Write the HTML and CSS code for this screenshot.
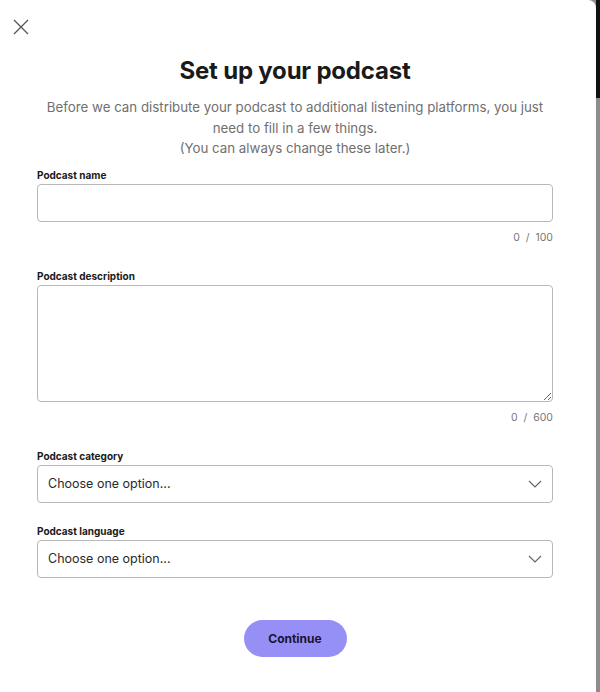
FILE: index.html
```html
<!DOCTYPE html>
<html lang="en">
<head>
  <meta charset="UTF-8">
  <title>Set up your podcast</title>
  <link rel="stylesheet" href="styles.css">
</head>
<body>

  <div class="page">
    <div class="modal">
      <button class="btn-close" aria-label="Close">
        <svg width="16" height="16" viewBox="0 0 16 16">
          <path d="M1 1 L15 15 M15 1 L1 15" stroke="#555" stroke-width="1.3" fill="none"/>
        </svg>
      </button>

      <h1 class="title">Set up your podcast</h1>
      <p class="intro">
        Before we can distribute your podcast to additional listening platforms, you just need to fill in a few things.<br>
        (You can always change these later.)
      </p>

      <form class="setup-form">
        <div class="field">
          <label for="nom">Podcast name</label>
          <input id="nom" type="text" class="input">
          <span class="counter">0 / 100</span>
        </div>

        <div class="field">
          <label for="desc">Podcast description</label>
          <textarea id="desc" class="input textarea"></textarea>
          <span class="counter">0 / 600</span>
        </div>

        <div class="field">
          <label for="cat">Podcast category</label>
          <div class="select">
            <span>Choose one option...</span>
            <svg width="14" height="8" viewBox="0 0 14 8"><path d="M1 1 L7 7 L13 1" stroke="#666" stroke-width="1.2" fill="none"/></svg>
          </div>
        </div>

        <div class="field">
          <label for="lang">Podcast language</label>
          <div class="select">
            <span>Choose one option...</span>
            <svg width="14" height="8" viewBox="0 0 14 8"><path d="M1 1 L7 7 L13 1" stroke="#666" stroke-width="1.2" fill="none"/></svg>
          </div>
        </div>

        <div class="actions">
          <button type="button" class="btn-continue">Continue</button>
        </div>
      </form>
    </div>
    <div class="backdrop"></div>
  </div>

</body>
</html>
```

FILE: styles.css
```css
body, html {
  margin: 0;
  padding: 0;
  font-family: 'Inter', 'Liberation Sans', sans-serif;
  background-color: #8c8c8c;
  color: #1a1a1a;
}

.page {
  display: flex;
  height: 692px;
}

.modal {
  width: 596px;
  box-sizing: border-box;
  padding: 0 43px 0 37px;
  background-color: #ffffff;
  border-top-right-radius: 8px;
  position: relative;
}

.backdrop {
  flex: 1;
  background: linear-gradient(#111111 0, #111111 98px, #8c8c8c 98px);
}

.btn-close {
  position: absolute;
  top: 19px;
  left: 13px;
  padding: 0;
  border: none;
  background: none;
  cursor: pointer;
}

.title {
  margin: 0;
  padding-top: 56px;
  font-size: 24px;
  font-weight: 700;
  letter-spacing: -0.2px;
  text-align: center;
  line-height: 30px;
}

.intro {
  margin: 11px 0 0;
  padding: 0 4px;
  font-size: 13.3px;
  line-height: 20.5px;
  color: #707070;
  text-align: center;
}

.setup-form {
  margin-top: 9px;
}

.field {
  display: flex;
  flex-direction: column;
}

.field label {
  font-size: 10px;
  font-weight: 700;
  color: #1a1a1a;
  line-height: 14px;
  margin-bottom: 2px;
}

.input {
  height: 38px;
  box-sizing: border-box;
  border: 1px solid #b8b8b8;
  border-radius: 4px;
  font-family: inherit;
  font-size: 13px;
  padding: 0 10px;
  background-color: #fff;
}

.textarea {
  height: 117px;
  resize: vertical;
}

.counter {
  align-self: flex-end;
  margin-top: 9px;
  margin-bottom: 24px;
  font-size: 10.5px;
  color: #777;
  line-height: 14px;
  word-spacing: 3px;
}

.select {
  height: 38px;
  box-sizing: border-box;
  border: 1px solid #b8b8b8;
  border-radius: 4px;
  display: flex;
  align-items: center;
  justify-content: space-between;
  padding: 0 10px;
  font-size: 12.5px;
  color: #2a2a2a;
  margin-bottom: 21px;
}

.actions {
  display: flex;
  justify-content: center;
  margin-top: 21px;
}

.btn-continue {
  width: 103px;
  height: 37px;
  background-color: #9690f6;
  color: #191433;
  border: none;
  border-radius: 20px;
  font-family: inherit;
  font-weight: 700;
  font-size: 12px;
  cursor: pointer;
}
```
